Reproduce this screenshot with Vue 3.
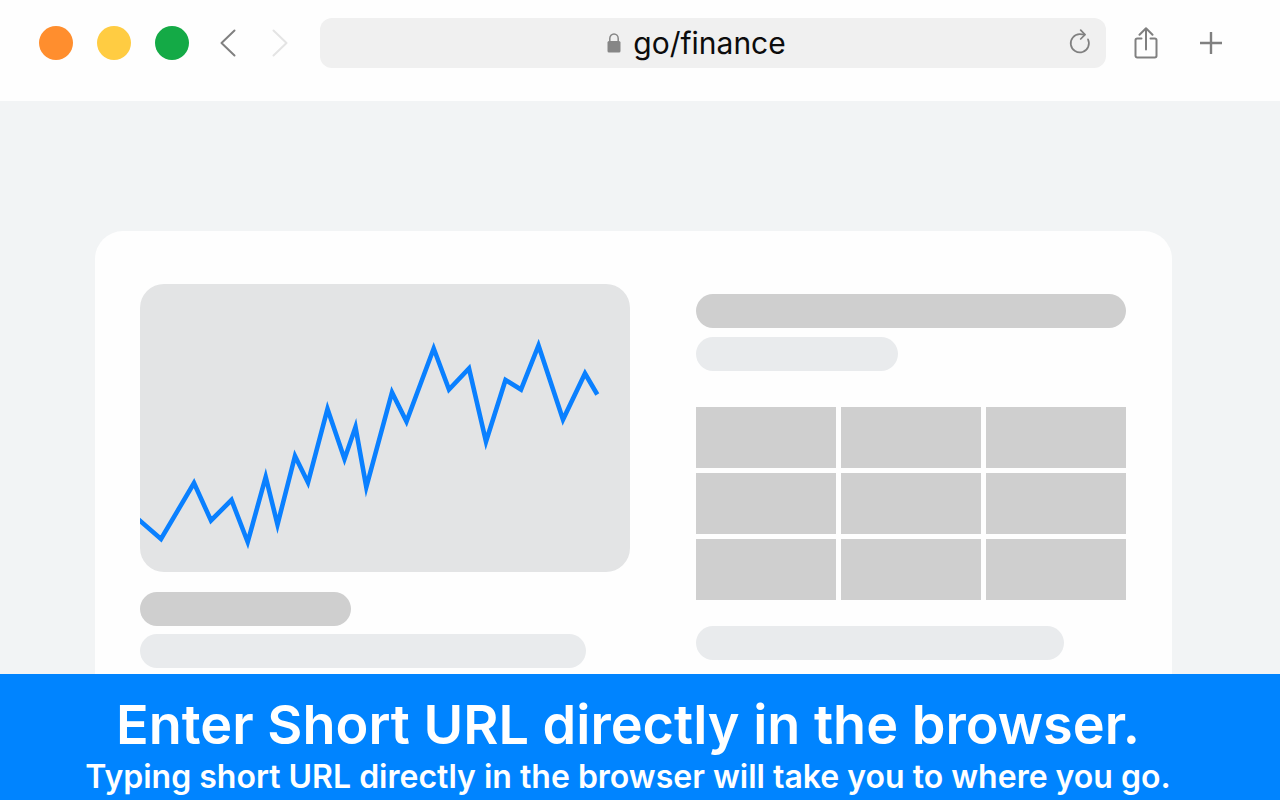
<template>
  <div class="browser">
    <header class="toolbar">
      <div class="lights">
        <button
          v-for="light in lights"
          :key="light.label"
          type="button"
          class="light"
          :class="light.color"
          :aria-label="light.label"
        />
      </div>
      <nav class="history" aria-label="History">
        <button type="button" class="icon-button" aria-label="Back">
          <svg width="16" height="28" viewBox="0 0 16 28">
            <path d="M14.5 1.5 1.5 14l13 12.5" />
          </svg>
        </button>
        <button type="button" class="icon-button" aria-label="Forward" disabled>
          <svg width="16" height="28" viewBox="0 0 16 28">
            <path d="M1.5 1.5 14.5 14l-13 12.5" />
          </svg>
        </button>
      </nav>
      <div class="address">
        <label class="location" for="url">
          <svg class="lock" width="14" height="20" viewBox="0 0 14 20" role="img" aria-label="Secure">
            <path class="shackle" d="M2.8 9V5.5a4.2 4.5 0 0 1 8.4 0V9" />
            <rect x="0.5" y="8" width="13" height="11.5" rx="1.5" />
          </svg>
          <input id="url" v-model="url" class="url" type="text" size="9" aria-label="Address" spellcheck="false">
        </label>
        <button type="button" class="icon-button" aria-label="Reload">
          <svg class="reload" width="22" height="28" viewBox="0 0 22 28">
            <path d="M19 10.3a9.1 9.1 0 1 1-8.3-5.1q2.500 0 5 .4" />
            <path d="m11.700 1.200 4.300 4.400-4.300 4.400" />
          </svg>
        </button>
      </div>
      <div class="actions">
        <button type="button" class="icon-button" aria-label="Share">
          <svg width="24" height="32" viewBox="0 0 24 32">
            <path d="M7.5 11.5H3.2a1.7 1.7 0 0 0-1.7 1.7v15.6a1.7 1.7 0 0 0 1.7 1.7h17.6a1.7 1.7 0 0 0 1.7-1.7V13.2a1.7 1.7 0 0 0-1.7-1.7h-4.3" />
            <path d="M12 22.5v-21M5.5 7.7 12 1.2l6.5 6.5" />
          </svg>
        </button>
        <button type="button" class="icon-button" aria-label="New tab">
          <svg class="plus" width="22" height="22" viewBox="0 0 22 22">
            <path d="M11 .5v21M.5 11h21" />
          </svg>
        </button>
      </div>
    </header>

    <main class="page">
      <div class="card">
        <section class="column">
          <div class="chart">
            <svg viewBox="0 0 490 288" role="img" aria-label="Line chart">
              <polyline :points="points" />
            </svg>
          </div>
          <div class="bar dark short" />
          <div class="bar wide" />
        </section>
        <section class="column details">
          <div class="bar dark" />
          <div class="bar half" />
          <div class="cells">
            <div v-for="n in 9" :key="n" class="cell" />
          </div>
          <div class="bar medium" />
        </section>
      </div>
    </main>

    <footer class="banner">
      <h1>Enter Short URL directly in the browser.</h1>
      <p>Typing short URL directly in the browser will take you to where you go.</p>
    </footer>
  </div>
</template>

<script setup>
import { computed, ref } from 'vue';

const url = ref('go/finance');

const lights = [
  { label: 'Close', color: 'orange' },
  { label: 'Minimize', color: 'yellow' },
  { label: 'Zoom', color: 'green' }
];

const series = [
  [-2, 235], [21, 255], [54, 199], [71, 236.5], [91.5, 216], [107.7, 258],
  [125.7, 193], [137.5, 240.5], [155, 172], [168, 198.5], [187.5, 125],
  [204.5, 175], [215.5, 143], [226.3, 203], [252, 108.5], [266.5, 137.5],
  [293.7, 64.5], [309, 105.5], [329, 84.5], [346, 157.5], [365.5, 96],
  [381, 105.5], [398.5, 61.5], [423, 135.5], [445, 89.5], [457.3, 110.5]
];
const points = computed(() => series.map((point) => point.join(',')).join(' '));
</script>

<style>
body {
  background: #f2f4f5;
}
</style>

<style scoped>
.browser {
  display: flex;
  flex-direction: column;
  min-height: 100vh;
  font-family: Inter, "Liberation Sans", sans-serif;
}

.toolbar {
  display: flex;
  align-items: center;
  padding: 18px 58px 33px 39px;
  background: #fefefe;
}

.lights {
  display: flex;
  gap: 24px;
}

.light {
  width: 34px;
  height: 34px;
  padding: 0;
  border: 0;
  border-radius: 50%;
}

.orange {
  background: #ff8e2e;
}

.yellow {
  background: #ffcc42;
}

.green {
  background: #14aa46;
}

.history {
  display: flex;
  gap: 36px;
  margin: 0 32px 0 31px;
}

.icon-button {
  display: flex;
  padding: 0;
  border: 0;
  background: none;
  color: #808080;
}

.icon-button:disabled {
  color: #e4e4e4;
}

.icon-button svg {
  fill: none;
  stroke: currentColor;
  stroke-width: 2;
  stroke-linecap: round;
  stroke-linejoin: round;
}

.icon-button .plus {
  stroke-width: 2.4;
}

.icon-button .reload {
  stroke-width: 1.7;
}

.address {
  display: flex;
  flex: 1;
  align-items: center;
  height: 50px;
  padding: 0 15px 0 4px;
  border-radius: 12px;
  background: #f0f0f0;
}

.location {
  display: flex;
  flex: 1;
  align-items: center;
  justify-content: center;
  gap: 12px;
}

.lock {
  fill: #868686;
}

.shackle {
  fill: none;
  stroke: #868686;
  stroke-width: 1.5;
}

.url {
  field-sizing: content;
  padding: 0;
  border: 0;
  outline: 0;
  background: none;
  color: #0c0c0c;
  font-family: inherit;
  font-size: 30px;
  line-height: 40px;
}

.actions {
  display: flex;
  align-items: center;
  gap: 42px;
  margin-left: 28px;
}

.page {
  display: flex;
  flex: 1;
  padding: 130px 108px 0 95px;
  background: #f2f4f5;
}

.card {
  display: grid;
  flex: 1;
  grid-template-columns: 49fr 43fr;
  gap: 66px;
  padding: 53px 46px 6px 45px;
  border-radius: 28px 28px 0 0;
  background: #fefefe;
}

.column {
  display: flex;
  flex-direction: column;
  gap: 8px;
}

.chart {
  overflow: hidden;
  margin-bottom: 12px;
  border-radius: 24px;
  background: #e3e4e5;
}

.chart svg {
  display: block;
  width: 100%;
}

.chart polyline {
  fill: none;
  stroke: #0a80ff;
  stroke-width: 4.6;
  stroke-miterlimit: 12;
}

.bar {
  height: 34px;
  border-radius: 17px;
  background: #e9ebed;
}

.dark {
  background: #cfcfcf;
}

.short {
  width: 43%;
}

.wide {
  width: 91%;
}

.half {
  width: 47%;
}

.medium {
  width: 368px;
  max-width: 100%;
}

.details {
  gap: 9px;
  padding-top: 10px;
}

.cells {
  display: grid;
  grid-template-columns: repeat(3, 1fr);
  gap: 5px;
  margin: 27px 0 17px;
}

.cell {
  height: 61px;
  background: #cfcfcf;
}

.banner {
  padding: 18px 24px 4px 0;
  background: #0084ff;
  color: #fff;
  text-align: center;
}

h1,
p {
  margin: 0;
  font-weight: 600;
}

h1 {
  font-size: 54px;
  line-height: 66px;
}

p {
  font-size: 32px;
  line-height: 38px;
}
</style>
